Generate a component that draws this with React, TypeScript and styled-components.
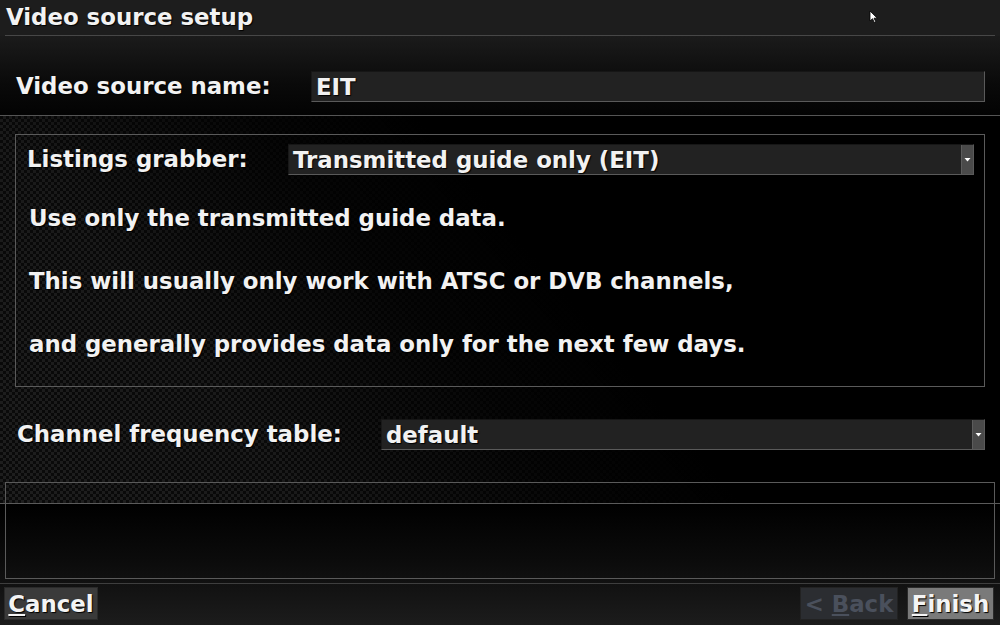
import React from "react";
import styled, { createGlobalStyle } from "styled-components";

const Global = createGlobalStyle`
  html, body { margin: 0; padding: 0; background: #000; }
  body { font-family: "DejaVu Sans", "Liberation Sans", sans-serif; }
  * { box-sizing: border-box; }
`;

const Page = styled.div`
  position: relative;
  width: 1000px;
  height: 625px;
  overflow: hidden;
  display: flex;
  flex-direction: column;
  background: #000;
  color: #f2f2f2;
  font-family: "DejaVu Sans", "Liberation Sans", sans-serif;
  font-weight: bold;
  font-size: 22.85px;
  text-shadow: 1px 1px 1px #000;
`;

const Header = styled.div`
  height: 36px;
  padding: 0 5px;
  background: #1d1d1d;
`;

const Title = styled.div`
  height: 36px;
  line-height: 34px;
  padding-left: 1px;
  border-bottom: 1px solid #474747;
`;

const NameSection = styled.div`
  height: 80px;
  padding: 35px 15px 0 16px;
  display: flex;
  align-items: flex-start;
  background: linear-gradient(to bottom, #1b1b1b 0%, #0a0a0a 60%, #030303 100%);
  border-bottom: 1px solid #555;
`;

const Label = styled.div<{ $w: number }>`
  flex: 0 0 ${(p) => p.$w}px;
  height: 31px;
  line-height: 31px;
  white-space: nowrap;
`;

const Field = styled.div`
  flex: 1;
  position: relative;
  height: 31px;
  line-height: 30px;
  padding-left: 4px;
  background: #222;
  border-top: 1px solid #161616;
  border-left: 1px solid #181818;
  border-right: 1px solid #5a5a5a;
  border-bottom: 1px solid #5a5a5a;
  white-space: nowrap;
`;

const Arrow = styled.div`
  position: absolute;
  right: 0;
  top: 0;
  bottom: 0;
  width: 12px;
  background: #4a4a4a;
  border-left: 1px solid #5c5c5c;
  display: flex;
  align-items: center;
  justify-content: center;
`;

const Main = styled.div`
  height: 388px;
  padding-top: 18px;
  display: flex;
  flex-direction: column;
  border-bottom: 1px solid #5a5a5a;
  background-image:
    linear-gradient(50deg, rgba(0,0,0,0) 0%, rgba(0,0,0,0.15) 24%, rgba(0,0,0,0.8) 44%, #000 56%),
    repeating-conic-gradient(#1e1e1e 0 25%, #0a0a0a 0 50%);
  background-size: 100% 100%, 6px 6px;
`;

const Group = styled.div`
  margin: 0 15px;
  height: 253px;
  border: 1px solid #5a5a5a;
  padding: 9px 10px 0 11px;
  display: flex;
  flex-direction: column;
`;

const Row = styled.div<{ $pl?: number; $pr?: number }>`
  display: flex;
  padding-left: ${(p) => p.$pl ?? 0}px;
  padding-right: ${(p) => p.$pr ?? 0}px;
`;

const Description = styled.div`
  margin-top: 12px;
  padding-left: 2px;
`;

const Line = styled.div`
  height: 63px;
  line-height: 63px;
  white-space: nowrap;
`;

const Channel = styled(Row)`
  margin-top: 32px;
`;

const BoxTop = styled.div`
  margin: 32px 5px 0 5px;
  height: 21px;
  border: 1px solid #5a5a5a;
  border-bottom: none;
`;

const Bottom = styled.div`
  flex: 1;
  display: flex;
  flex-direction: column;
  background: linear-gradient(to bottom, #000 0%, #0c0c0c 50%, #1c1c1c 100%);
`;

const BoxBottom = styled.div`
  margin: 0 5px;
  height: 75px;
  border: 1px solid #5a5a5a;
  border-top: none;
`;

const Divider = styled.div`
  margin-top: 4px;
  height: 1px;
  background: #3e3e3e;
`;

const ButtonBar = styled.div`
  margin-top: 3px;
  padding: 0 6px 0 4px;
  display: flex;
  align-items: flex-start;
`;

const Button = styled.div<{ $variant: "normal" | "disabled" | "focus"; $w: number }>`
  width: ${(p) => p.$w}px;
  height: 33px;
  line-height: 32px;
  text-align: center;
  white-space: nowrap;
  background: ${(p) =>
    p.$variant === "focus" ? "#7a7a7a" : p.$variant === "disabled" ? "#2b2d31" : "#3a3a3a"};
  color: ${(p) => (p.$variant === "disabled" ? "#4a505c" : "#f4f4f4")};
  border: 1px solid ${(p) => (p.$variant === "disabled" ? "#222" : "#2a2a2a")};
  text-shadow: ${(p) => (p.$variant === "disabled" ? "none" : "1px 1px 1px #000")};
  u { text-decoration-thickness: 2px; text-underline-offset: 2px; }
`;

const Spacer = styled.div`
  flex: 1;
`;

const Gap = styled.div<{ $w: number }>`
  width: ${(p) => p.$w}px;
`;

const Cursor = styled.svg`
  position: absolute;
  left: 869px;
  top: 10px;
`;

const DropArrow = () => (
  <Arrow>
    <svg width="7" height="5" viewBox="0 0 7 5">
      <path d="M0.5 1 L6.5 1 L3.5 4.5 Z" fill="#fff" />
    </svg>
  </Arrow>
);

export default function App() {
  return (
    <>
      <Global />
      <Page>
        <Header>
          <Title>Video source setup</Title>
        </Header>
        <NameSection>
          <Label $w={295}>Video source name:</Label>
          <Field>EIT</Field>
        </NameSection>
        <Main>
          <Group>
            <Row>
              <Label $w={261}>Listings grabber:</Label>
              <Field>
                Transmitted guide only (EIT)
                <DropArrow />
              </Field>
            </Row>
            <Description>
              <Line>Use only the transmitted guide data.</Line>
              <Line>This will usually only work with ATSC or DVB channels,</Line>
              <Line>and generally provides data only for the next few days.</Line>
            </Description>
          </Group>
          <Channel $pl={17} $pr={15}>
            <Label $w={364}>Channel frequency table:</Label>
            <Field>
              default
              <DropArrow />
            </Field>
          </Channel>
          <BoxTop />
        </Main>
        <Bottom>
          <BoxBottom />
          <Divider />
          <ButtonBar>
            <Button $variant="normal" $w={94}>
              <u>C</u>ancel
            </Button>
            <Spacer />
            <Button $variant="disabled" $w={98}>
              &lt; <u>B</u>ack
            </Button>
            <Gap $w={9} />
            <Button $variant="focus" $w={87}>
              <u>F</u>inish
            </Button>
          </ButtonBar>
        </Bottom>
        <Cursor width="10" height="14" viewBox="0 0 10 14">
          <path d="M1 1 L1 11 L3.5 8.7 L5.3 12.5 L6.8 11.8 L5 8.2 L8.3 8.2 Z" fill="#fff" stroke="#000" strokeWidth="0.8" />
        </Cursor>
      </Page>
    </>
  );
}
